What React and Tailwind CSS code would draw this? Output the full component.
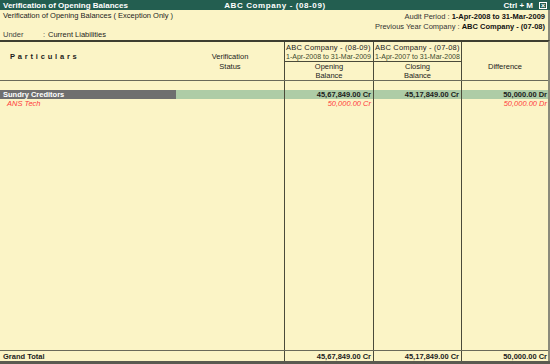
import React from 'react'

const cols = 'grid grid-cols-[176px_108px_89px_88px_87px]'

function Cell({ children, line, className = '' }) {
    return (
        <div className={`${line ? 'border-l border-[#4a4a3a]' : ''} ${className}`}>
            {children}
        </div>
    )
}

export default function App() {
    return (
        <div className="w-[550px] h-[364px] bg-[#fbf4c6] flex flex-col overflow-hidden text-[7.5px] leading-[9px] text-[#1c1c1c] font-['Liberation_Sans',Arial,sans-serif]">
            {/* Title bar */}
            <div className="h-[10px] bg-[#235e50] text-white font-bold text-[8px] grid grid-cols-[1fr_auto_1fr] items-center pl-[3px] pr-[3px] shrink-0">
                <span>Verification of Opening Balances</span>
                <span className="tracking-[0.6px]">ABC Company - (08-09)</span>
                <span className="flex justify-end items-center gap-[6px]">
                    Ctrl + M
                    <span className="w-[8px] h-[7px] border border-white flex items-center justify-center text-[7px] leading-none">×</span>
                </span>
            </div>

            {/* Info area */}
            <div className="h-[30px] shrink-0 border-r-2 border-[#8a8a7a]">
                <div className="flex justify-between pl-[3px] pr-[3px] pt-[1px]">
                    <span>Verification of Opening Balances ( Exception Only )</span>
                    <div className="flex flex-col items-end pt-[1px]">
                        <span className="text-[#333]">Audit Period : <b className="text-[#111]">1-Apr-2008 to 31-Mar-2009</b></span>
                        <span className="mt-[1px] text-[#333]">Previous Year Company : <b className="text-[#111]">ABC Company - (07-08)</b></span>
                    </div>
                </div>
                <div className="flex pl-[3px] -mt-[1px]">
                    <span className="w-[40px] text-[#444]">Under</span>
                    <span className="text-[#444] w-[5px]">:</span>
                    <span>Current Liabilities</span>
                </div>
            </div>

            {/* Table */}
            <div className="flex-1 flex flex-col border-t-2 border-[#3e3e30] border-r-2 border-r-[#8a8a7a] min-h-0">
                {/* Header */}
                <div className={`${cols} h-[39px] shrink-0 border-b border-[#6a6a5a]`}>
                    <Cell className="flex items-center pl-[10px] pb-[9px]">
                        <span className="font-bold tracking-[2.8px]">Particulars</span>
                    </Cell>
                    <Cell className="flex flex-col items-center justify-center pt-[1px]">
                        <span>Verification</span>
                        <span className="mt-[1px]">Status</span>
                    </Cell>
                    <Cell line className="flex flex-col">
                        <div className="h-[20px] border-b border-[#4a4a3a] flex flex-col justify-center pl-[1px] whitespace-nowrap overflow-hidden">
                            <span className="tracking-[0.2px]">ABC Company - (08-09)</span>
                            <span className="text-[7px] text-[#3c4a2e]">1-Apr-2008 to 31-Mar-2009</span>
                        </div>
                        <div className="flex-1 flex flex-col items-center justify-center">
                            <span>Opening</span>
                            <span>Balance</span>
                        </div>
                    </Cell>
                    <Cell line className="flex flex-col">
                        <div className="h-[20px] border-b border-[#4a4a3a] flex flex-col justify-center pl-[1px] whitespace-nowrap overflow-hidden">
                            <span className="tracking-[0.2px]">ABC Company - (07-08)</span>
                            <span className="text-[7px] text-[#3c4a2e]">1-Apr-2007 to 31-Mar-2008</span>
                        </div>
                        <div className="flex-1 flex flex-col items-center justify-center">
                            <span>Closing</span>
                            <span>Balance</span>
                        </div>
                    </Cell>
                    <Cell line className="flex items-center justify-center pt-[10px]">
                        <span>Difference</span>
                    </Cell>
                </div>

                {/* Gap row */}
                <div className={`${cols} h-[9px] shrink-0`}>
                    <Cell /><Cell /><Cell line /><Cell line /><Cell line />
                </div>

                {/* Group row */}
                <div className={`${cols} h-[9px] shrink-0 font-bold bg-[#aecca6]`}>
                    <Cell className="bg-[#6f6f6f] text-white pl-[3px]">Sundry Creditors</Cell>
                    <Cell />
                    <Cell line className="text-right pr-[2px]">45,67,849.00 Cr</Cell>
                    <Cell line className="text-right pr-[2px]">45,17,849.00 Cr</Cell>
                    <Cell line className="text-right pr-[1px]">50,000.00 Dr</Cell>
                </div>

                {/* Ledger row */}
                <div className={`${cols} h-[10px] shrink-0 italic text-[#ff3b3b]`}>
                    <Cell className="pl-[7px]">ANS Tech</Cell>
                    <Cell />
                    <Cell line className="text-right pr-[2px]">50,000.00 Cr</Cell>
                    <Cell line />
                    <Cell line className="text-right pr-[1px]">50,000.00 Dr</Cell>
                </div>

                {/* Filler */}
                <div className={`${cols} flex-1`}>
                    <Cell /><Cell /><Cell line /><Cell line /><Cell line />
                </div>

                {/* Grand total */}
                <div className={`${cols} h-[11px] shrink-0 font-bold border-t border-[#6a6a5a]`}>
                    <Cell className="pl-[3px] flex items-center">Grand Total</Cell>
                    <Cell />
                    <Cell line className="pr-[2px] flex items-center justify-end">45,67,849.00 Cr</Cell>
                    <Cell line className="pr-[2px] flex items-center justify-end">45,17,849.00 Cr</Cell>
                    <Cell line className="pr-[1px] flex items-center justify-end">50,000.00 Cr</Cell>
                </div>
            </div>
            <div className="h-[3px] shrink-0 bg-[#5a5a50]" />
        </div>
    )
}
